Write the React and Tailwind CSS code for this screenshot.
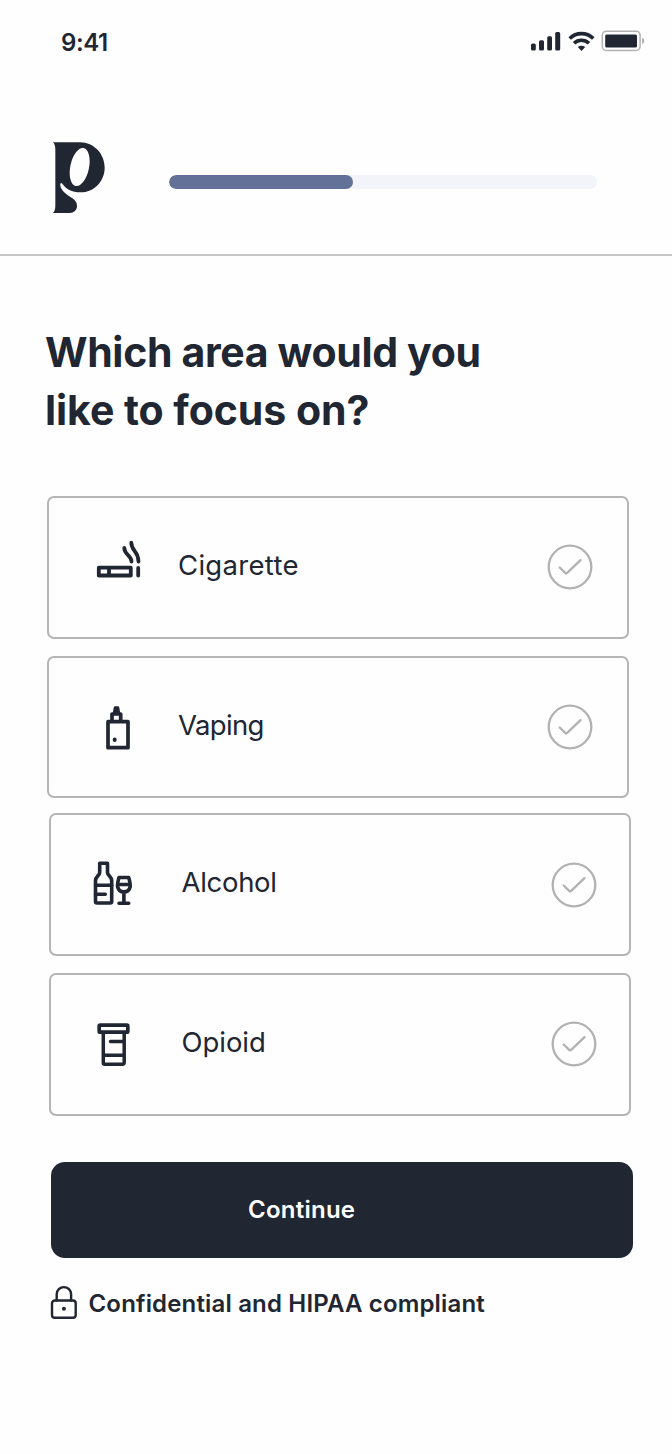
import React, { useState } from 'react';

const stroke = {
  fill: 'none',
  stroke: 'currentColor',
  strokeLinecap: 'round',
  strokeLinejoin: 'round',
};

function CigaretteIcon() {
  return (
    <svg width="48" height="48" viewBox="0 0 48 48" strokeWidth="3.8" {...stroke}>
      <path d="M3.8 28.7h32v7.8h-32zM14 28.7v7.8M43.2 28.9v7.6" />
      <path d="M29.3 9c0 7 7.2 7 7.2 13.5M36.3 3.7c0 8.3 7.2 8.3 7.2 18.8" />
    </svg>
  );
}

function VapeIcon() {
  return (
    <svg width="48" height="48" viewBox="0 0 48 48" strokeWidth="3.7" {...stroke}>
      <path d="M13 18.7h20v26h-20zM17 18.7v-7.7h8.7v7.7" />
      <path d="M19.3 10l.9-5.3h2.6l.9 5.3z" fill="currentColor" strokeWidth="3" />
      <ellipse cx="19.7" cy="36.7" rx="2" ry="2.3" fill="currentColor" stroke="none" />
    </svg>
  );
}

function AlcoholIcon() {
  return (
    <svg width="48" height="48" viewBox="0 0 48 48" strokeWidth="3.6" {...stroke}>
      <path d="M9.7 4.2h7.8v9.3c0 2.8 4.2 3.8 4.2 8v21a1.5 1.5 0 0 1-1.5 1.5h-13.2a1.5 1.5 0 0 1-1.5-1.5v-21c0-4.2 4.2-5.2 4.2-8z" />
      <path d="M5.5 26.3h16.2M5.5 35.3h9.8" />
      <path d="M29 18.5h9.7c1.3 4.5 2 7 1.4 9.5-.8 3.3-3 4.9-6.2 4.9s-5.4-1.6-6.2-4.9c-.6-2.5 0-5 1.3-9.5zM28 25.5h12M33.9 33v11.3M29 44.2h9.7" />
    </svg>
  );
}

function OpioidIcon() {
  return (
    <svg width="48" height="48" viewBox="0 0 48 48" strokeWidth="3.7" {...stroke}>
      <rect x="5.2" y="5.2" width="28.6" height="7" rx="1" />
      <path d="M9.3 12.5v30.2a1.5 1.5 0 0 0 1.5 1.5h17.9a1.5 1.5 0 0 0 1.5-1.5v-30.2M16.5 21.5h13.7M9.3 35.3h20.9" strokeWidth="3.5" />
    </svg>
  );
}

function CheckCircle() {
  return (
    <svg width="46" height="46" viewBox="0 0 46 46" strokeWidth="2.3" {...stroke}>
      <circle cx="23" cy="23" r="21.3" />
      <path d="M12.7 23.5l5.5 5.3c.7.7 1.3.7 2 0l13.3-12.7" />
    </svg>
  );
}

function Logo() {
  return (
    <svg width="52" height="71" viewBox="69 66 156 213">
      <path
        fill="currentColor"
        d="M69 67H150C192 67 224 102 224 143C224 184 192 217 152 217C125 217 107 206 97 191C93 187 90 190 91 197C94 213 112 225 125 233C136 240 141 247 141 258C141 270 132 279 119 279H69C74 275 76 268 76 255V90C76 78 74 72 69 67Z"
      />
      <ellipse cx="149" cy="141" rx="28" ry="58" transform="rotate(12 149 141)" fill="#fefefe" />
    </svg>
  );
}

function StatusBar() {
  return (
    <div className="flex h-[84px] items-center justify-between pl-[61px] pr-[27px] pt-px">
      <span className="text-[24px] font-semibold tracking-[-0.4px]">9:41</span>
      <div className="flex items-center pb-[4px]">
        <svg width="31" height="22" viewBox="0 0 31 22" fill="currentColor">
          <rect x="1" y="13.5" width="4.8" height="7" rx="1.5" />
          <rect x="9" y="10.3" width="5" height="10.2" rx="1.5" />
          <rect x="17.2" y="6.2" width="4.8" height="14.3" rx="1.5" />
          <rect x="25.2" y="2" width="5" height="18.5" rx="1.5" />
        </svg>
        <svg className="ml-[7px]" width="27" height="22" viewBox="0 0 27 22" fill="none" stroke="currentColor" strokeWidth="3.6">
          <path d="M1.7 8.5C8.3 2 18.7 2 25.3 8.5M6 13.2C10.3 9.2 16.7 9.2 21 13.2" />
          <path d="M9.8 17c2.2-1.8 5.2-1.8 7.4 0l-3.7 4z" fill="currentColor" stroke="none" />
        </svg>
        <svg className="ml-[6px]" width="44" height="22" viewBox="0 0 44 22">
          <rect x="1.3" y="1.2" width="37.8" height="19.2" rx="4" fill="none" stroke="#b2b2b5" strokeWidth="1.5" />
          <rect x="4.2" y="4.5" width="31.8" height="13" rx="1.5" fill="currentColor" />
          <path d="M41.2 7.8c2.6 1.3 2.6 5.1 0 6.4z" fill="#a9a9ac" />
        </svg>
      </div>
    </div>
  );
}

const options = [
  { id: 'cigarette', label: 'Cigarette', icon: CigaretteIcon, card: 'ml-[47px]', iconBox: 'ml-[46px] pb-[9px]', text: 'ml-[35px] tracking-[0.3px]', check: 'mr-[34px]' },
  { id: 'vaping', label: 'Vaping', icon: VapeIcon, card: 'ml-[47px] mt-[17px]', iconBox: 'ml-[46px] pb-[1px]', text: 'ml-[35px] tracking-[-0.65px]', check: 'mr-[34px]' },
  { id: 'alcohol', label: 'Alcohol', icon: AlcoholIcon, card: 'ml-[49px] mt-[15px]', iconBox: 'ml-[39px] pb-[3px]', text: 'ml-[43.5px] tracking-[-0.3px]', check: 'mr-[32px]' },
  { id: 'opioid', label: 'Opioid', icon: OpioidIcon, card: 'ml-[49px] mt-[17px]', iconBox: 'ml-[43px]', text: 'ml-[39.5px] tracking-[-0.05px]', check: 'mr-[32px]' },
];

export default function App() {
  const [selected, setSelected] = useState(null);

  return (
    <div className="min-h-[1454px] w-[672px] overflow-hidden bg-[#fefefe] font-['Inter',sans-serif] text-[#202632]">
      <StatusBar />

      {/* Header */}
      <header className="flex h-[172px] items-start border-b-2 border-[#c5c4c7] pl-[53px] pt-[58px]">
        <Logo />
        <div className="ml-[64px] mt-[33px] h-[14px] w-[428px] overflow-hidden rounded-full bg-[#f2f4f9]">
          <div className="h-full w-[184px] rounded-full bg-[#637198]" />
        </div>
      </header>

      <h1 className="ml-[45px] mt-[67px] whitespace-nowrap text-[41px] font-bold leading-[58px]">
        <span className="block tracking-[-0.35px]">Which area would you</span>
        <span className="block tracking-[-0.05px]">like to focus on?</span>
      </h1>

      {/* Options */}
      <div className="mt-[57px] flex flex-col">
        {options.map(({ id, label, icon: Icon, card, iconBox, text, check }) => (
          <button
            key={id}
            onClick={() => setSelected(id)}
            className={`flex h-[142.7px] w-[582px] items-center rounded-[7px] border-2 border-[#b5b5b6] text-left ${card}`}
          >
            <span className={iconBox}><Icon /></span>
            <span className={`flex-1 pb-[3px] text-[27.5px] font-normal leading-none ${text}`}>{label}</span>
            <span className={`${check} ${selected === id ? 'text-[#202632]' : 'text-[#b2b2b3]'}`}><CheckCircle /></span>
          </button>
        ))}
      </div>

      <button className="ml-[50.5px] mt-[46px] flex h-[96px] w-[582px] items-center rounded-[14px] bg-[#202632] pl-[197.5px] pt-px text-[24px] font-semibold tracking-[0.25px] text-white">
        Continue
      </button>

      <div className="ml-[50px] mt-[27px] flex items-center">
        <svg width="28" height="36" viewBox="0 0 28 36" strokeWidth="2.4" {...stroke}>
          <rect x="2" y="15.5" width="23.7" height="17.2" rx="2.8" />
          <path d="M6.7 15.5v-6.2a7.2 7.2 0 0 1 14.4 0v6.2" />
          <circle cx="13.9" cy="23.7" r="2" fill="currentColor" stroke="none" />
        </svg>
        <span className="ml-[10.5px] whitespace-nowrap pt-px text-[24px] font-semibold tracking-[0.17px]">Confidential and HIPAA compliant</span>
      </div>
    </div>
  );
}
